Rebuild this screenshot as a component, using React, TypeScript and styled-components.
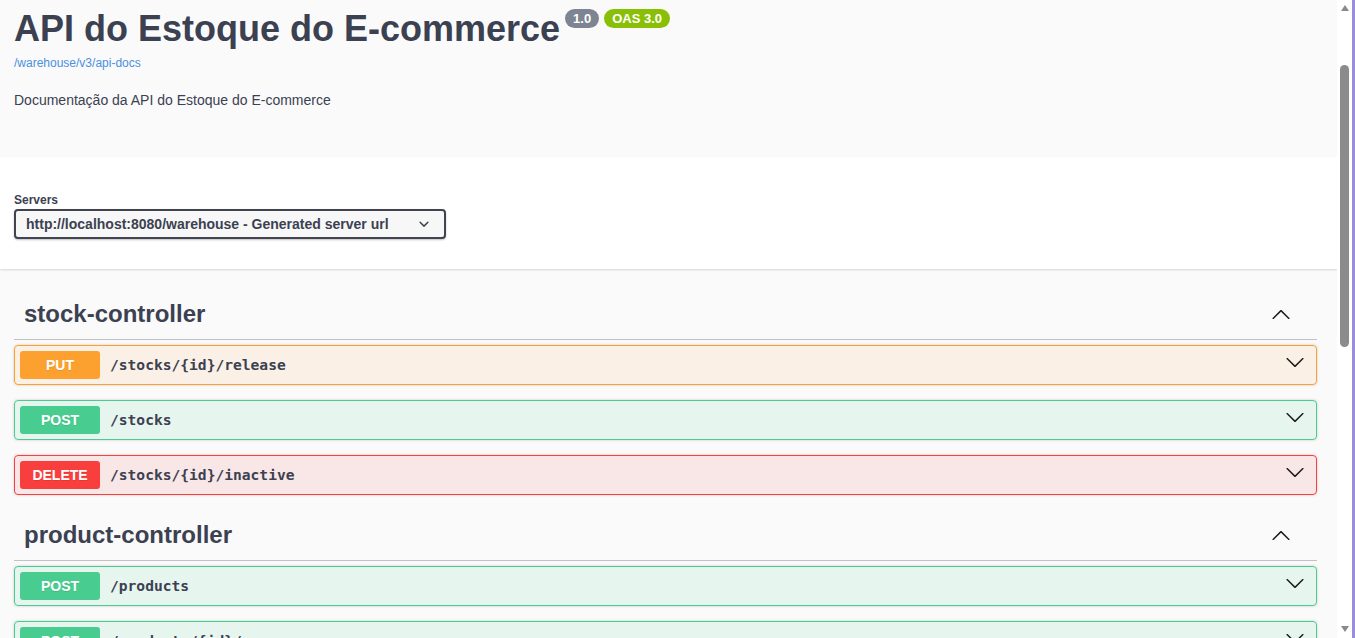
import React, { useLayoutEffect, useRef } from 'react';
import styled, { createGlobalStyle } from 'styled-components';

const GlobalStyle = createGlobalStyle`
  html, body { margin: 0; padding: 0; height: 100%; overflow: hidden; background: #fafafa; }
  #root { height: 100%; }
  * { box-sizing: border-box; }
`;

const SANS = `'Liberation Sans', Arial, sans-serif`;
const MONO = `'DejaVu Sans Mono', 'Liberation Mono', monospace`;
const TEXT = '#3b4151';

const Frame = styled.div`
  height: 100vh;
  display: flex;
  border-right: 3px solid #9b8ed8;
  background: #fafafa;
`;

const Scroller = styled.div`
  flex: 1;
  min-width: 0;
  height: 100%;
  overflow-y: scroll;
  overflow-x: hidden;
  scrollbar-width: none;
  background: #fafafa;
  font-family: ${SANS};
  color: ${TEXT};
  &::-webkit-scrollbar { display: none; }
`;

/* drawn scrollbar (the window's classic scrollbar) */
const ScrollTrack = styled.div`
  width: 15px;
  flex: none;
  height: 100%;
  background: #ffffff;
  display: flex;
  flex-direction: column;
  align-items: center;
`;

const ScrollArrow = styled.div<{ $dir: 'up' | 'down' }>`
  width: 15px;
  height: 15px;
  flex: none;
  display: flex;
  justify-content: center;
  align-items: ${(p) => (p.$dir === 'up' ? 'flex-start' : 'flex-end')};
  padding: ${(p) => (p.$dir === 'up' ? '5px 0 0' : '0 0 6px')};
  &::before {
    content: '';
    width: 0;
    height: 0;
    border-left: 4.5px solid transparent;
    border-right: 4.5px solid transparent;
    ${(p) =>
      p.$dir === 'up'
        ? 'border-bottom: 6.5px solid #8a8a8a;'
        : 'border-top: 6.5px solid #8a8a8a;'}
  }
`;

const ScrollRail = styled.div`
  flex: 1;
  width: 15px;
  display: flex;
  justify-content: center;
`;

const ScrollThumb = styled.div`
  width: 9px;
  height: 282px;
  margin-top: 50px;
  border-radius: 4.5px;
  background: #8b8b8b;
`;

const Topbar = styled.header`
  height: 64px;
  background: #1b1b1b;
  display: flex;
  align-items: center;
  padding: 0 20px 0 14px;
  gap: 10px;
`;

const LogoText = styled.span`
  color: #fff;
  font: 700 22px ${SANS};
`;

const ExploreInput = styled.div`
  margin-left: auto;
  width: 520px;
  height: 34px;
  border: 2px solid #62a03f;
  border-radius: 4px 0 0 4px;
  background: #fff;
  font: 14px ${MONO};
  display: flex;
  align-items: center;
  padding: 0 8px;
  color: #333;
`;

const ExploreButton = styled.div`
  height: 34px;
  padding: 0 30px;
  margin-left: -10px;
  background: #62a03f;
  color: #fff;
  font: 700 16px ${SANS};
  display: flex;
  align-items: center;
  border-radius: 0 4px 4px 0;
`;

const InfoSection = styled.section`
  padding: 50px 20px 49px 14px;
`;

const TitleRow = styled.div`
  display: flex;
  align-items: flex-start;
`;

const Title = styled.h2`
  margin: 0;
  font: 700 36px/normal ${SANS};
  color: ${TEXT};
`;

const Badge = styled.span<{ $bg: string }>`
  display: inline-block;
  margin: 0.5px 0 0 5px;
  padding: 2px 8px;
  border-radius: 57px;
  background: ${(p) => p.$bg};
  color: #fff;
  font: 700 13px/15px ${SANS};
`;

const BaseUrl = styled.a`
  display: block;
  margin-top: 6px;
  font: 12px/normal ${SANS};
  color: #4990e2;
  text-decoration: none;
`;

const Description = styled.p`
  margin: 22px 0 0;
  font: 14px/normal ${SANS};
  color: ${TEXT};
`;

const SchemeContainer = styled.section`
  background: #fff;
  box-shadow: 0 1px 2px 0 rgba(0, 0, 0, 0.15);
  padding: 30px 20px 30px 14px;
  margin-bottom: 20px;
`;

const ServersTitle = styled.div`
  padding-top: 6px;
  margin-bottom: 2px;
  font: 700 12px/14px ${SANS};
  color: ${TEXT};
`;

const SelectBox = styled.div`
  display: inline-flex;
  align-items: center;
  border: 2px solid #41444e;
  border-radius: 4px;
  background: #f7f7f7;
  box-shadow: 0 1px 2px 0 rgba(0, 0, 0, 0.25);
  padding: 5px 10px;
  font: 700 14px/normal ${SANS};
  color: ${TEXT};
`;

const SelectChevron = styled.svg`
  display: block;
  width: 20px;
  height: 20px;
  margin: -2px 0 -2px 25px;
  fill: ${TEXT};
`;

const Wrapper = styled.main`
  padding: 0 20px 30px 14px;
`;

const TagSection = styled.section`
  display: flex;
  flex-direction: column;
`;

const TagHeader = styled.div`
  display: flex;
  align-items: center;
  padding: 10px 20px 11px 10px;
  border-bottom: 1px solid rgba(59, 65, 81, 0.3);
  margin-bottom: 5px;
`;

const TagName = styled.h3`
  flex: 1;
  margin: 0;
  font: 700 24px/29px ${SANS};
  color: ${TEXT};
`;

const ArrowButton = styled.span<{ $lift?: number }>`
  display: flex;
  padding: 0 6px 0 10px;
  margin-bottom: ${(p) => p.$lift ?? 0}px;
  svg { display: block; width: 20px; height: 20px; fill: #1a1a1a; }
`;

const METHOD_COLORS: Record<string, string> = {
  PUT: '#fca130',
  POST: '#49cc90',
  DELETE: '#f93e3e',
  GET: '#61affe',
  PATCH: '#50e3c2',
};

const METHOD_BG: Record<string, string> = {
  PUT: 'rgba(252,161,48,.1)',
  POST: 'rgba(73,204,144,.1)',
  DELETE: 'rgba(249,62,62,.1)',
  GET: 'rgba(97,175,254,.1)',
  PATCH: 'rgba(80,227,194,.1)',
};

const Opblock = styled.div<{ $method: string }>`
  border: 1px solid ${(p) => METHOD_COLORS[p.$method]};
  background: ${(p) => METHOD_BG[p.$method]};
  border-radius: 4px;
  box-shadow: 0 0 3px rgba(0, 0, 0, 0.19);
  margin-bottom: 15px;
`;

const Summary = styled.div`
  display: flex;
  align-items: center;
  padding: 5px;
`;

const Method = styled.span<{ $method: string }>`
  min-width: 80px;
  padding: 6px 0;
  border-radius: 3px;
  background: ${(p) => METHOD_COLORS[p.$method]};
  color: #fff;
  font: 700 14px/16px ${SANS};
  text-align: center;
  text-shadow: 0 1px 0 rgba(0, 0, 0, 0.1);
`;

const Path = styled.span`
  flex: 1;
  padding: 0 10px;
  font: 700 14.6px/18px ${MONO};
  color: ${TEXT};
`;

const Models = styled.section`
  border: 1px solid rgba(59, 65, 81, 0.3);
  border-radius: 4px;
  margin: 15px 0 0;
`;

const ModelsHeader = styled.h4`
  display: flex;
  align-items: center;
  margin: 0;
  padding: 10px 20px 10px 10px;
  font: 700 16px/20px ${SANS};
  color: ${TEXT};
  span { flex: 1; }
`;

const ModelList = styled.div`
  padding: 5px 0 0;
`;

const ModelItem = styled.div`
  margin: 0 20px 15px;
  padding: 10px;
  border-radius: 4px;
  background: rgba(0, 0, 0, 0.05);
  display: flex;
  align-items: center;
  font: 700 16px/20px ${SANS};
  color: #505050;
`;

const ArrowDown = () => (
  <svg viewBox="0 0 20 20">
    <path d="M17.418 6.109c.272-.268.709-.268.979 0s.271.701 0 .969l-7.908 7.83c-.27.268-.707.268-.979 0l-7.908-7.83c-.27-.268-.27-.701 0-.969.271-.268.709-.268.979 0L10 13.25l7.418-7.141z" />
  </svg>
);

const ArrowUp = () => (
  <svg viewBox="0 0 20 20">
    <path d="M17.418 14.908c.272.268.709.268.979 0s.271-.701 0-.969l-7.908-7.83c-.27-.268-.707-.268-.979 0l-7.908 7.83c-.27.268-.27.701 0 .969.271.268.709.268.979 0L10 7.768l7.418 7.14z" />
  </svg>
);

type Op = { method: string; path: string };
type Tag = { name: string; ops: Op[] };

const TAGS: Tag[] = [
  {
    name: 'stock-controller',
    ops: [
      { method: 'PUT', path: '/stocks/{id}/release' },
      { method: 'POST', path: '/stocks' },
      { method: 'DELETE', path: '/stocks/{id}/inactive' },
    ],
  },
  {
    name: 'product-controller',
    ops: [
      { method: 'POST', path: '/products' },
      { method: 'POST', path: '/products/{id}/reserve' },
      { method: 'GET', path: '/products' },
      { method: 'GET', path: '/products/{id}' },
      { method: 'DELETE', path: '/products/{id}/inactive' },
    ],
  },
];

const SCHEMAS = ['StockRequest', 'StockResponse', 'ProductRequest', 'ProductResponse'];

export default function App() {
  const scrollRef = useRef<HTMLDivElement>(null);

  useLayoutEffect(() => {
    if (scrollRef.current) scrollRef.current.scrollTop = 106;
  }, []);

  return (
    <>
      <GlobalStyle />
      <Frame>
        <Scroller ref={scrollRef}>
          <Topbar>
            <LogoText>Swagger</LogoText>
            <ExploreInput>/warehouse/v3/api-docs</ExploreInput>
            <ExploreButton>Explore</ExploreButton>
          </Topbar>

          <InfoSection>
            <TitleRow>
              <Title>API do Estoque do E-commerce</Title>
              <Badge $bg="#7d8492">1.0</Badge>
              <Badge $bg="#89bf04">OAS 3.0</Badge>
            </TitleRow>
            <BaseUrl href="#">/warehouse/v3/api-docs</BaseUrl>
            <Description>Documentação da API do Estoque do E-commerce</Description>
          </InfoSection>

          <SchemeContainer>
            <ServersTitle>Servers</ServersTitle>
            <SelectBox>
              <span>http://localhost:8080/warehouse - Generated server url</span>
              <SelectChevron viewBox="0 0 20 20">
                <path d="M13.418 7.859a.695.695 0 0 1 .978 0 .68.68 0 0 1 0 .969l-3.908 3.83a.697.697 0 0 1-.979 0l-3.908-3.83a.68.68 0 0 1 0-.969.695.695 0 0 1 .978 0L10 11l3.418-3.141z" />
              </SelectChevron>
            </SelectBox>
          </SchemeContainer>

          <Wrapper>
            {TAGS.map((tag) => (
              <TagSection key={tag.name}>
                <TagHeader>
                  <TagName>{tag.name}</TagName>
                  <ArrowButton>
                    <ArrowUp />
                  </ArrowButton>
                </TagHeader>
                {tag.ops.map((op) => (
                  <Opblock key={op.method + op.path} $method={op.method}>
                    <Summary>
                      <Method $method={op.method}>{op.method}</Method>
                      <Path>{op.path}</Path>
                      <ArrowButton $lift={7}>
                        <ArrowDown />
                      </ArrowButton>
                    </Summary>
                  </Opblock>
                ))}
              </TagSection>
            ))}

            <Models>
              <ModelsHeader>
                <span>Schemas</span>
                <ArrowButton>
                  <ArrowUp />
                </ArrowButton>
              </ModelsHeader>
              <ModelList>
                {SCHEMAS.map((s) => (
                  <ModelItem key={s}>{s}</ModelItem>
                ))}
              </ModelList>
            </Models>
          </Wrapper>
        </Scroller>
        <ScrollTrack aria-hidden="true">
          <ScrollArrow $dir="up" />
          <ScrollRail>
            <ScrollThumb />
          </ScrollRail>
          <ScrollArrow $dir="down" />
        </ScrollTrack>
      </Frame>
    </>
  );
}
